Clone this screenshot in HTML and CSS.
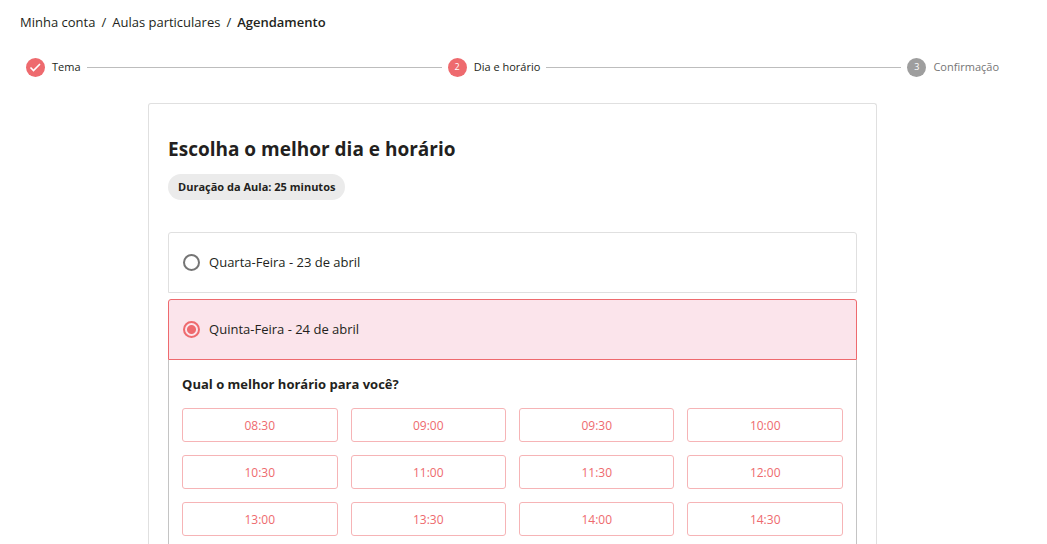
FILE: index.html
```
<!DOCTYPE html>
<html lang="pt-BR">
<head>
  <meta charset="UTF-8" />
  <meta name="viewport" content="width=device-width, initial-scale=1.0"/>
  <title>Agendamento</title>
  <link rel="stylesheet" href="styles.css">
</head>
<body>
  <nav class="breadcrumb">
    <a href="#">Minha conta</a>
    <span>/</span>
    <a href="#">Aulas particulares</a>
    <span>/</span>
    <strong>Agendamento</strong>
  </nav>

  <div class="stepper">
    <div class="step">
      <span class="step-icon">
        <svg width="19" height="19" viewBox="0 0 19 19"><path d="M4.5 9.5l3 3 6.5-6.5" fill="none" stroke="#fff" stroke-width="1.6"/></svg>
      </span>
      <span>Tema</span>
    </div>
    <div class="step-line"></div>
    <div class="step">
      <span class="step-icon">2</span>
      <span>Dia e horário</span>
    </div>
    <div class="step-line"></div>
    <div class="step disabled">
      <span class="step-icon">3</span>
      <span>Confirmação</span>
    </div>
  </div>

  <main class="card">
    <h1>Escolha o melhor dia e horário</h1>
    <span class="chip">Duração da Aula: 25 minutos</span>

    <form class="days">
      <label class="day">
        <input type="radio" name="dia" value="23" />
        Quarta-Feira - 23 de abril
      </label>
      <div class="day-group">
        <label class="day selected">
          <input type="radio" name="dia" value="24" checked />
          Quinta-Feira - 24 de abril
        </label>
        <div class="times">
          <h2>Qual o melhor horário para você?</h2>
          <div class="time-grid">
            <button type="button">08:30</button>
            <button type="button">09:00</button>
            <button type="button">09:30</button>
            <button type="button">10:00</button>
            <button type="button">10:30</button>
            <button type="button">11:00</button>
            <button type="button">11:30</button>
            <button type="button">12:00</button>
            <button type="button">13:00</button>
            <button type="button">13:30</button>
            <button type="button">14:00</button>
            <button type="button">14:30</button>
          </div>
        </div>
      </div>
    </form>
  </main>
</body>
</html>
```
FILE: styles.css
```
* {
  box-sizing: border-box;
}

body {
  display: flex;
  flex-direction: column;
  min-height: 100vh;
  margin: 0;
  padding: 12px 42px 0 20px;
  background: #fff;
  color: #231f20;
  font-family: 'Open Sans', 'Noto Sans', sans-serif;
  font-size: 13px;
  line-height: 20px;
}

/* Breadcrumb */
.breadcrumb {
  display: flex;
  gap: 6px;
}

.breadcrumb a {
  color: inherit;
  text-decoration: none;
}

.breadcrumb strong {
  font-weight: 600;
}

/* Steps */
.stepper {
  display: flex;
  align-items: center;
  margin-top: 25px;
  font-size: 11px;
}

.step {
  display: flex;
  align-items: center;
  gap: 7px;
  padding: 0 6px;
}

.step-icon {
  display: flex;
  align-items: center;
  justify-content: center;
  width: 19px;
  height: 19px;
  border-radius: 50%;
  background: #ee6a6e;
  color: #fff;
  font-size: 9px;
}

.step-line {
  flex: 1;
  border-top: 1px solid #bdbdbd;
}

.step.disabled {
  color: #757575;
}

.step.disabled .step-icon {
  background: #9e9e9e;
}

/* Card */
.card {
  display: flex;
  flex: 1;
  flex-direction: column;
  align-items: flex-start;
  width: 74%;
  margin: 26px auto 0;
  padding: 32px 19px 0;
  border: 1px solid #e0e0e0;
  border-bottom: 0;
  border-radius: 3px 3px 0 0;
}

h1 {
  margin: 0;
  font-size: 19px;
  line-height: 26px;
}

.chip {
  margin-top: 12px;
  padding: 0 10px;
  border-radius: 13px;
  background: #ebebeb;
  font-size: 11px;
  font-weight: 700;
  line-height: 26px;
}

/* Days */
.days {
  display: flex;
  flex: 1;
  flex-direction: column;
  gap: 6px;
  width: 100%;
  margin-top: 32px;
}

.day {
  display: flex;
  align-items: center;
  gap: 9px;
  height: 61px;
  padding: 0 14px 1px;
  border: 1px solid #e0e0e0;
  border-radius: 3px 3px 0 0;
  cursor: pointer;
}

.day.selected {
  border-color: #ee6a6e;
  background: #fbe4eb;
}

.day input {
  appearance: none;
  width: 17px;
  height: 17px;
  margin: 0;
  border: 2px solid #757575;
  border-radius: 50%;
}

.day input:checked {
  border-color: #ee6a6e;
  background: radial-gradient(circle, #ee6a6e 4px, transparent 5px);
}

.day-group {
  display: flex;
  flex: 1;
  flex-direction: column;
}

/* Times */
.times {
  flex: 1;
  padding: 14px 13px 8px;
  border: 1px solid #c4c4c4;
  border-width: 0 1px;
}

h2 {
  margin: 0 0 14px;
  font-size: 13px;
  line-height: 20px;
}

.time-grid {
  display: grid;
  grid-template-columns: repeat(4, 1fr);
  gap: 13px;
}

.time-grid button {
  height: 34px;
  padding: 0;
  border: 1px solid #f6b4b6;
  border-radius: 3px;
  background: #fff;
  color: #ee6a6e;
  font-family: inherit;
  font-size: 12px;
  cursor: pointer;
}
```
